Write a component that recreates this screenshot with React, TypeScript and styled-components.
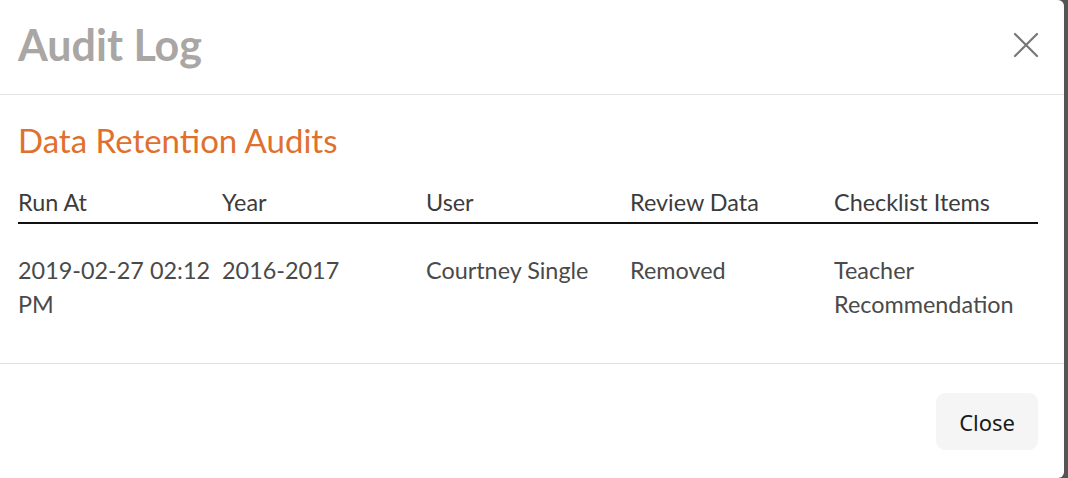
import React from 'react';
import styled, { createGlobalStyle } from 'styled-components';

const GlobalStyle = createGlobalStyle`
  html, body {
    margin: 0;
    padding: 0;
    background: #545454;
    overflow: hidden;
  }
  * {
    box-sizing: border-box;
  }
`;

const rows = [
  {
    runAt: '2019-02-27 02:12 PM',
    year: '2016-2017',
    user: 'Courtney Single',
    review: 'Removed',
    items: 'Teacher Recommendation',
  },
];

const Modal = styled.div`
  width: 1064px;
  height: 478px;
  background: #ffffff;
  border-radius: 0 6px 6px 0;
  display: flex;
  flex-direction: column;
  font-family: Lato, 'Noto Sans', sans-serif;
`;

const Header = styled.div`
  height: 95px;
  padding: 0 26px 4px 18px;
  display: flex;
  align-items: center;
  justify-content: space-between;
  border-bottom: 1px solid #e2e2e2;
`;

const Title = styled.h1`
  margin: 0;
  font-size: 43px;
  font-weight: 700;
  color: #a9a6a4;
  line-height: 1.2;
`;

const CloseIcon = styled.button`
  border: none;
  background: none;
  padding: 0;
  width: 28px;
  height: 28px;
  display: flex;
  align-items: center;
  justify-content: center;
  cursor: pointer;
  margin-right: -2px;
`;

const Body = styled.div`
  padding: 27px 26px 42px 18px;
  border-bottom: 1px solid #e2e2e2;
`;

const SectionTitle = styled.h2`
  margin: 0 0 27px;
  font-size: 33px;
  font-weight: 400;
  line-height: 36px;
  color: #e0702e;
`;

const Table = styled.table`
  width: 100%;
  border-collapse: collapse;
  table-layout: fixed;
  font-size: 23.4px;
  line-height: 34px;
`;

const Th = styled.th`
  text-align: left;
  font-weight: 400;
  color: #3c3c3c;
  padding: 0 4px 3px 0;
  border-bottom: 2px solid #111111;
`;

const Td = styled.td`
  vertical-align: top;
  color: #4a4a4a;
  padding: 29px 4px 0 0;
`;

const Footer = styled.div`
  flex: 1;
  display: flex;
  justify-content: flex-end;
  align-items: flex-start;
  padding: 29px 26px 0 18px;
`;

const Button = styled.button`
  height: 57px;
  padding: 0 23px;
  border: none;
  border-radius: 9px;
  background: #f4f5f4;
  color: #1a1a1a;
  font-family: 'Noto Sans', sans-serif;
  font-size: 22px;
  cursor: pointer;
`;

export default function App() {
  return (
    <>
      <GlobalStyle />
      <Modal>
        <Header>
          <Title>Audit Log</Title>
          <CloseIcon aria-label="Close">
            <svg width="26" height="26" viewBox="0 0 26 26">
              <path d="M2 2 L24 24 M24 2 L2 24" stroke="#777777" strokeWidth="2.2" strokeLinecap="round" />
            </svg>
          </CloseIcon>
        </Header>
        <Body>
          <SectionTitle>Data Retention Audits</SectionTitle>
          <Table>
            <thead>
              <tr>
                <Th>Run At</Th>
                <Th>Year</Th>
                <Th>User</Th>
                <Th>Review Data</Th>
                <Th>Checklist Items</Th>
              </tr>
            </thead>
            <tbody>
              {rows.map((r) => (
                <tr key={r.runAt}>
                  <Td>{r.runAt}</Td>
                  <Td>{r.year}</Td>
                  <Td>{r.user}</Td>
                  <Td>{r.review}</Td>
                  <Td>{r.items}</Td>
                </tr>
              ))}
            </tbody>
          </Table>
        </Body>
        <Footer>
          <Button>Close</Button>
        </Footer>
      </Modal>
    </>
  );
}
